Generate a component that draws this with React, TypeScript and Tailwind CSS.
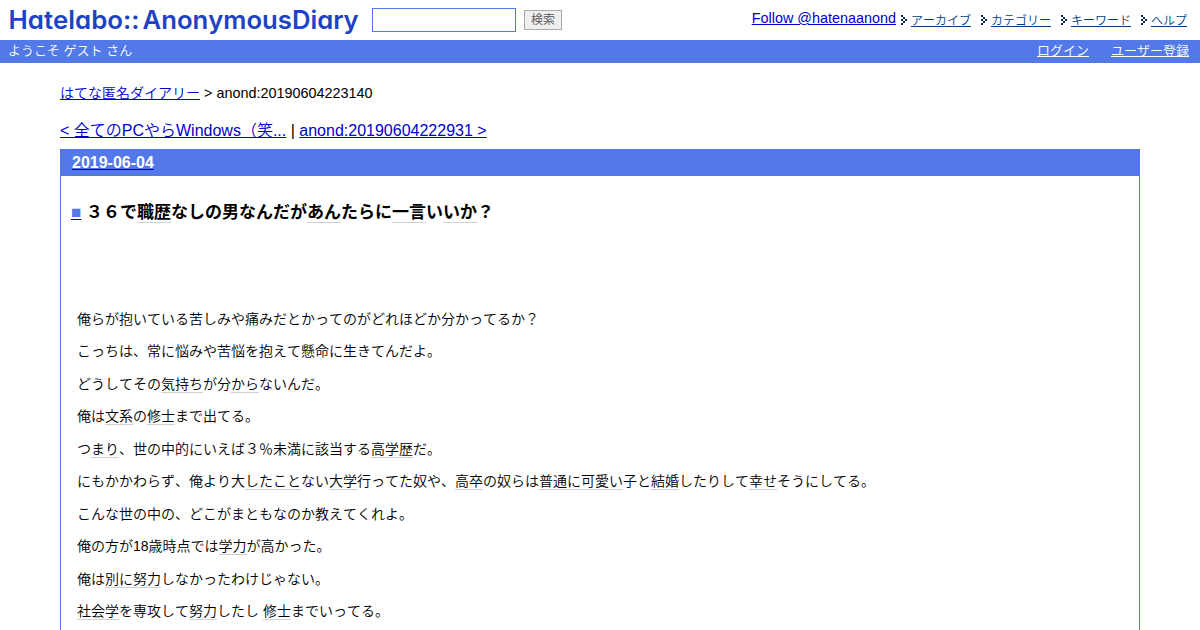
import React from 'react'

type Segment = string | { keyword: string }

const kw = (keyword: string): Segment => ({ keyword })

const menu = ['アーカイブ', 'カテゴリー', 'キーワード', 'ヘルプ']

const title: Segment[] = [
  '３６で',
  kw('職歴'),
  'なしの男なんだが',
  kw('あん'),
  'たらに',
  kw('一言'),
  'い',
  kw('いか'),
  '？'
]

const paragraphs: Segment[][] = [
  ['俺らが抱いている苦しみや痛みだとかってのがどれほどか分かってるか？'],
  ['こっちは、常に悩みや苦悩を抱えて懸命に生きてんだよ。'],
  ['どうしてその', kw('気持ち'), 'が分', kw('から'), 'ないんだ。'],
  ['俺は', kw('文系'), 'の', kw('修士'), 'まで出てる。'],
  ['つ', kw('まり'), '、世の中的にいえば３％未満に該当する', kw('高学歴'), 'だ。'],
  [
    'にもかかわらず、俺より大',
    kw('したこと'),
    'ない',
    kw('大学'),
    '行ってた奴や、',
    kw('高卒'),
    'の奴らは',
    kw('普通に可愛い'),
    '子と',
    kw('結婚'),
    'したりして',
    kw('幸せ'),
    'そうにしてる。'
  ],
  ['こんな世の中の、どこがまともなのか教えてくれよ。'],
  ['俺の方が18歳時点では', kw('学力'), 'が高かった。'],
  ['俺は', kw('別に努力'), 'しなかったわけじゃない。'],
  [kw('社会学'), 'を専攻して', kw('努力'), 'したし ', kw('修士'), 'までいってる。']
]

const Segments: React.FC<{ items: Segment[]; keywordClass: string }> = ({ items, keywordClass }) => (
  <>
    {items.map((item, i) =>
      typeof item === 'string' ? (
        <React.Fragment key={i}>{item}</React.Fragment>
      ) : (
        <a key={i} href="#" className={`inline-block border-b border-[#d0d0d0] pt-px leading-none ${keywordClass}`}>
          {item.keyword}
        </a>
      )
    )}
  </>
)

const Logo = () => (
  <svg width="362" height="40" className="shrink-0" aria-label="Hatelabo::AnonymousDiary">
    <g
      className="fill-[#1d43c4] font-['Inter',sans-serif] text-[25.5px] font-semibold"
      style={{ fontFeatureSettings: '"cv11"' }}
    >
      <text x="8.5" y="28.5" textLength="131" lengthAdjust="spacingAndGlyphs">Hatelabo::</text>
      <text x="142.5" y="28.5" textLength="216" lengthAdjust="spacingAndGlyphs">AnonymousDiary</text>
    </g>
  </svg>
)

const Bullet = () => (
  <svg width="6" height="10" viewBox="0 0 6 10" shapeRendering="crispEdges" className="mr-1 fill-[#0b2a5c]">
    <path d="M0 0h2v2h-2zM2 2h2v2h-2zM4 4h2v2h-2zM2 6h2v2h-2zM0 8h2v2h-2zM0 4h2v2h-2z" />
  </svg>
)

export default function App() {
  return (
    <div className="h-[630px] overflow-hidden bg-white font-['Liberation_Sans','Noto_Sans_CJK_JP',sans-serif] font-[350] text-black [font-kerning:none]">
      <header className="flex h-10">
        <Logo />
        <form className="ml-2.5 flex items-start pt-2">
          <input className="h-6 w-36 border border-[#5279e7] bg-white" />
          <button
            type="button"
            className="mt-0.5 ml-2 h-5 w-[38px] border border-[#a9a9a9] bg-[#efefef] text-xs leading-[17px] text-[#555]"
          >
            検索
          </button>
        </form>
        <nav className="mr-[13px] ml-auto flex items-start">
          <a href="#" className="mt-2 text-[14.4px] leading-5 text-[#0000cc] underline">
            Follow @hatenaanond
          </a>
          <ul className="ml-[5px] flex gap-2.5">
            {menu.map(label => (
              <li key={label} className="flex h-10 items-center">
                <Bullet />
                <a href="#" className="pt-px text-xs leading-5 text-[#004080] underline">
                  {label}
                </a>
              </li>
            ))}
          </ul>
        </nav>
      </header>

      <div className="flex h-[23px] justify-between bg-[#5279e7] pr-[11px] pl-2 text-[13px] leading-[22px] text-white">
        <span>ようこそ ゲスト さん</span>
        <div className="flex gap-[22px]">
          <a href="#" className="underline">ログイン</a>
          <a href="#" className="underline">ユーザー登録</a>
        </div>
      </div>

      <main className="px-[60px]">
        <div className="mt-5 text-[14.4px] leading-5">
          <a href="#" className="text-sm leading-5 text-[#0000cc] underline">はてな匿名ダイアリー</a>
          {' > anond:20190604223140'}
        </div>

        <div className="mt-4 h-[30px] text-base leading-6">
          <a href="#" className="text-[#0000cc] underline">{'< 全てのPCやらWindows（笑...'}</a>
          {' | '}
          <a href="#" className="text-[#0000cc] underline">{'anond:20190604222931 >'}</a>
        </div>

        <article className="h-[500px] border border-[#5279e7]">
          <h2 className="h-[26px] bg-[#5279e7] pl-[11px] text-base leading-[25px] font-bold">
            <a href="#" className="text-white underline decoration-[#0000cc]">2019-06-04</a>
          </h2>
          <h3 className="mt-[25px] ml-2.5 h-6 text-[17px] leading-6 font-bold">
            <a href="#" className="text-[#5279e7] underline decoration-[#0000cc]">■</a>{' '}
            <Segments items={title} keywordClass="h-5" />
          </h3>
          <div className="mt-[78px] ml-4 text-sm">
            {paragraphs.map((items, i) => (
              <p key={i} className="h-[32.45px] leading-[32px]">
                <Segments items={items} keywordClass="h-[17px]" />
              </p>
            ))}
          </div>
        </article>
      </main>
    </div>
  )
}
